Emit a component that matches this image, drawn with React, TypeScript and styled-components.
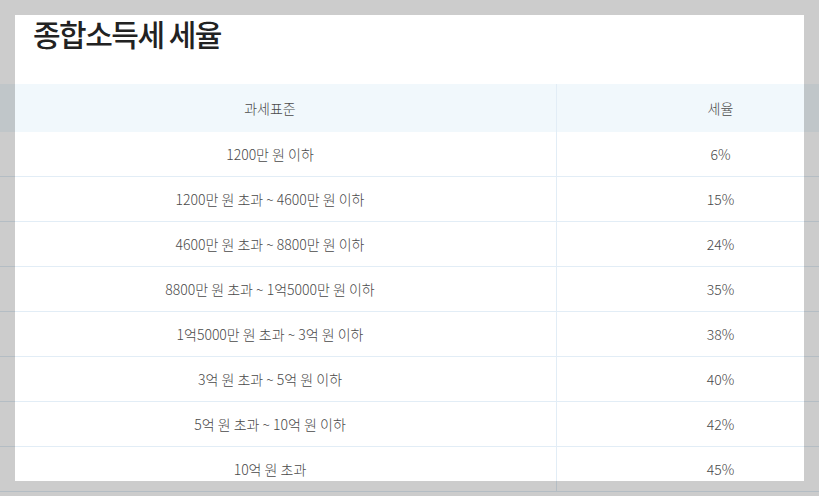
import React from "react";
import styled, { createGlobalStyle } from "styled-components";

const GlobalStyle = createGlobalStyle`
  html, body {
    margin: 0;
    padding: 0;
    background: #ffffff;
    overflow: hidden;
  }
  body {
    font-family: "Noto Sans CJK KR", "Noto Sans", sans-serif;
  }
`;

type Rate = {
  bracket: string
  rate: string
};

const rates: Rate[] = [
  { bracket: "1200만 원 이하", rate: "6%" },
  { bracket: "1200만 원 초과 ~ 4600만 원 이하", rate: "15%" },
  { bracket: "4600만 원 초과 ~ 8800만 원 이하", rate: "24%" },
  { bracket: "8800만 원 초과 ~ 1억5000만 원 이하", rate: "35%" },
  { bracket: "1억5000만 원 초과 ~ 3억 원 이하", rate: "38%" },
  { bracket: "3억 원 초과 ~ 5억 원 이하", rate: "40%" },
  { bracket: "5억 원 초과 ~ 10억 원 이하", rate: "42%" },
  { bracket: "10억 원 초과", rate: "45%" },
];

const App: React.FC = () => {
  return (
    <>
      <GlobalStyle />
      <Page>
        <Title>종합소득세 세율</Title>
        <Table>
          <HeadRow>
            <Cell>과세표준</Cell>
            <Cell divider>세율</Cell>
          </HeadRow>
          {rates.map((item) => (
            <Row key={item.bracket}>
              <Cell>{item.bracket}</Cell>
              <Cell divider>{item.rate}</Cell>
            </Row>
          ))}
        </Table>
        <Spotlight />
      </Page>
    </>
  );
};

const Page = styled.div`
  position: relative;
  width: 819px;
  height: 496px;
  overflow: hidden;
  background: #ffffff;
`;

const Title = styled.h2`
  margin: 0;
  height: 84px;
  box-sizing: border-box;
  padding: 12px 0 0 33px;
  font-size: 30px;
  line-height: 42px;
  font-weight: 500;
  letter-spacing: -1.5px;
  color: #222222;
`;

const Table = styled.div`
  margin-left: -16px;
  width: 900px;
`;

const Row = styled.div`
  display: grid;
  grid-template-columns: 572px 328px;
  height: 45px;
  box-sizing: border-box;
  border-bottom: 1px solid #e2edf6;
`;

const HeadRow = styled(Row)`
  height: 48px;
  background: #f1f8fc;
  border-bottom: none;
`;

const Cell = styled.div<{ divider?: boolean }>`
  display: flex;
  align-items: center;
  justify-content: center;
  font-size: 14px;
  font-weight: 300;
  color: #4a4a4a;
  border-left: ${(p) => (p.divider ? "1px solid #e2edf6" : "none")};
`;

const Spotlight = styled.div`
  position: absolute;
  left: 15px;
  top: 15px;
  width: 789px;
  height: 466px;
  box-shadow: 0 0 0 2000px rgba(0, 0, 0, 0.2);
  pointer-events: none;
`;

export default App;
